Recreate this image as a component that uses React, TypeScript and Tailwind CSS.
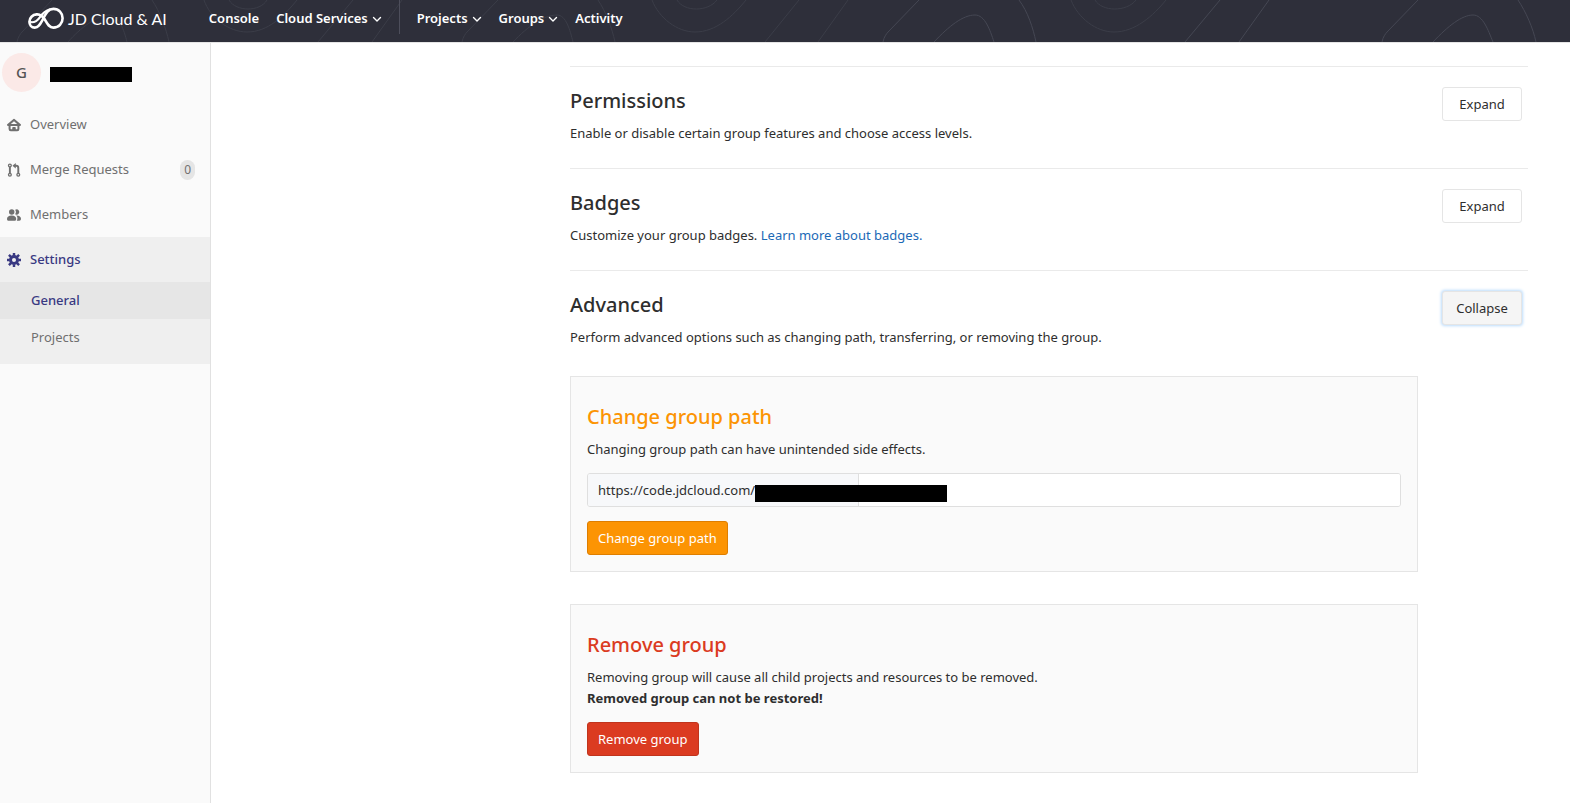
import type { ReactNode } from "react";

const focusRing = "shadow-[0_0_3px_1px_#bcdcfb] bg-[#f5f5f5]";

function Logo() {
  return (
    <svg className="h-6 w-9 shrink-0" viewBox="0 0 36 24" fill="none" stroke="#fff" strokeLinecap="round" aria-hidden="true">
      <path
        d="M8.6 7.4C12.4 7 15 9.6 17 12.8C19.2 16.6 21 20.6 25.4 20.6C30.8 20.6 34.6 16.4 34.6 11.2C34.6 6 30.8 1.9 25.4 1.9C19 1.9 17.2 8.4 14 13.8C12 17.4 10.4 20.6 6.8 20.6C3.4 20.6 1.4 17.8 1.4 14.8C1.4 10.8 4.6 7.8 8.6 7.4Z"
        strokeWidth="2.6"
      />
      <path d="M3 15.2C6.8 15.6 9.4 13.8 11.6 10.6C13.8 7.4 16.6 4 21.4 2.6" strokeWidth="2.2" />
    </svg>
  );
}

function HeaderPattern() {
  return (
    <svg className="absolute inset-0 h-[42px] w-[1570px]" viewBox="0 0 1570 42" fill="none" stroke="#3b3d48" aria-hidden="true">
      <path d="M17 42C18 37 20 34 23 31L52 0M152 0C160 12 166 28 169 42M68 42C80 28 98 15 109 15C119 15 124 30 127 42" />
      <path d="M204 0C210 18 229 32 247 32C268 32 284 16 297 0M229 0C236 12 260 12 267 0M318 42L353 0M372 42L402 0" />
      <path d="M462 42C463 37 465 34 468 31L498 0M598 0C606 12 612 28 615 42M513 42C528 26 544 15 557 15C566 15 570 30 573 42" />
      <path d="M652 0C659 18 677 32 695 32C716 32 733 16 746 0M677 0C684 12 708 12 717 0M765 42L799 0M818 42L848 0" />
      <path stroke="#454753" d="M883 42C884 37 886 34 889 31L919 0M1019 0C1028 12 1033 28 1036 42M934 42C949 26 963 15 975 15C985 15 990 30 994 42" />
      <path d="M1071 0C1078 18 1096 32 1114 32C1135 32 1153 16 1166 0M1095 0C1102 12 1127 12 1136 0" />
      <path stroke="#454753" d="M1185 42L1220 0M1239 42L1269 0M1382 42C1383 37 1385 34 1388 31L1418 0M1518 0C1526 12 1533 28 1536 42M1433 42C1448 26 1462 15 1473 15C1483 15 1488 30 1493 42" />
    </svg>
  );
}

function Chevron() {
  return (
    <svg className="h-2 w-2.5" viewBox="0 0 10 8" fill="none" stroke="currentColor" strokeWidth="1.4" strokeLinecap="round" strokeLinejoin="round" aria-hidden="true">
      <path d="M1.5 2.5L5 6L8.5 2.5" />
    </svg>
  );
}

function HomeIcon() {
  return (
    <svg className="h-3.5 w-3.5" viewBox="0 0 16 16" fill="currentColor" fillRule="evenodd" aria-hidden="true">
      <path d="M8.6 1.2L15.7 7.1C16.3 7.7 16 9.1 15.1 9.1H14.2V12.5A2.5 2.5 0 0 1 11.7 15H4.3A2.5 2.5 0 0 1 1.8 12.5V9.1H.9C0 9.1-.3 7.7.3 7.1L7.4 1.2A1 1 0 0 1 8.6 1.2ZM8 3.7L4.4 6.8H11.6ZM4.1 9.1V12.3A.5.5 0 0 0 4.6 12.8H6V11.2A1 1 0 0 1 7 10.2H9A1 1 0 0 1 10 11.2V12.8H11.4A.5.5 0 0 0 11.9 12.3V9.1Z" />
    </svg>
  );
}

function MergeIcon() {
  return (
    <svg className="h-3.5 w-3.5" viewBox="0 0 16 16" fill="none" stroke="currentColor" strokeWidth="1.5" aria-hidden="true">
      <circle cx="3.3" cy="2.8" r="1.6" />
      <circle cx="3.3" cy="13.4" r="1.6" />
      <circle cx="12.9" cy="13.4" r="1.6" />
      <path d="M3.3 4.4V11.8" strokeWidth="2.2" />
      <path d="M12.9 11.8V5.6C12.9 4 12.2 3.2 10.6 3.2H9" strokeWidth="2.2" />
      <path d="M6.2 3.2L10 0V6.4Z" fill="currentColor" stroke="none" />
    </svg>
  );
}

function MembersIcon() {
  return (
    <svg className="h-3.5 w-3.5" viewBox="0 0 16 16" fill="currentColor" aria-hidden="true">
      <circle cx="5.4" cy="4.6" r="3.1" />
      <path d="M9.4 2.1A3 3 0 1 1 9.4 7.1A4.4 4.4 0 0 0 9.4 2.1Z" />
      <path d="M0 12.5C0 10 2 8.6 5.3 8.6C8.6 8.6 10.5 10 10.5 12.5C10.5 14 9.6 14.6 8.3 14.6H2.2C.9 14.6 0 14 0 12.5Z" />
      <path d="M10.5 8.7C14 8.5 16 10 16 12.4C16 13.8 15.2 14.6 14 14.6H11.2C12.4 12.6 12.2 10.2 10.5 8.7Z" />
    </svg>
  );
}

function GearIcon() {
  return (
    <svg className="h-3.5 w-3.5" viewBox="0 0 16 16" aria-hidden="true">
      <g stroke="currentColor" strokeWidth="2.8">
        <path d="M8 0V3M8 13V16M0 8H3M13 8H16M2.2 2.2L4.5 4.5M11.5 11.5L13.8 13.8M13.8 2.2L11.5 4.5M4.5 11.5L2.2 13.8" />
      </g>
      <circle cx="8" cy="8" r="4" fill="none" stroke="currentColor" strokeWidth="3.4" />
    </svg>
  );
}

function NavItem({ icon, label, badge, active }: { icon: ReactNode; label: string; badge?: string; active?: boolean }) {
  return (
    <a href="#" className={`flex h-[45px] items-center gap-[9px] pt-px pr-[15px] pl-[7px] ${active ? "font-medium text-[#393982]" : "text-[#707070]"}`}>
      {icon}
      <span className="flex-1">{label}</span>
      {badge && <span className="rounded-full bg-[#e5e5e5] px-1 text-xs leading-5">{badge}</span>}
    </a>
  );
}

function Section({ title, button, active, children }: { title: string; button: string; active?: boolean; children: ReactNode }) {
  return (
    <section className="flex h-[102px] items-start justify-between border-t border-[#eaeaea] pt-5 pr-1.5">
      <div>
        <h4 className="text-xl leading-7 font-medium text-[#2e2e2e]">{title}</h4>
        <p className="mt-2 leading-5">{children}</p>
      </div>
      <button type="button" className={`h-[34px] w-20 rounded-[3px] border border-[#e5e5e5] pt-px ${active ? focusRing : "bg-white"}`}>
        {button}
      </button>
    </section>
  );
}

export default function App() {
  return (
    <div className="flex min-h-screen flex-col bg-white font-['Noto_Sans',sans-serif] text-[13px] text-[#2e2e2e]">
      <header className="relative h-[43px] overflow-hidden border-b border-[#e5e5e5] bg-[#2e2f3a] text-white">
        <HeaderPattern />
        <div className="relative flex h-[38px] items-center pl-7">
          <a href="#" className="flex items-center gap-1 font-['Lato',sans-serif] text-base">
            <Logo />
            JD Cloud &amp; AI
          </a>
          <nav className="ml-[42px] flex h-full items-center gap-[17px] font-semibold">
            <a href="#">Console</a>
            <button type="button" className="flex items-center gap-1">Cloud Services <Chevron /></button>
            <span className="h-[34px] w-px self-start bg-[#4d4e5b]" />
            <button type="button" className="flex items-center gap-1">Projects <Chevron /></button>
            <button type="button" className="flex items-center gap-1">Groups <Chevron /></button>
            <a href="#">Activity</a>
          </nav>
        </div>
      </header>
      <div className="flex flex-1">
        <aside className="w-[211px] shrink-0 border-r border-[#e1e1e1] bg-[#fafafa]">
          <a href="#" className="flex h-[59px] items-center gap-[9px] pl-0.5" aria-label="Group">
            <span className="flex h-[39px] w-[39px] items-center justify-center rounded-full bg-[#fbe9e7] text-[15px] font-medium text-[#555]">G</span>
            <span className="mt-1 h-[15px] w-[82px] bg-black" />
          </a>
          <nav>
            <NavItem icon={<HomeIcon />} label="Overview" />
            <NavItem icon={<MergeIcon />} label="Merge Requests" badge="0" />
            <NavItem icon={<MembersIcon />} label="Members" />
            <div className="bg-[#efefef] pb-2">
              <NavItem icon={<GearIcon />} label="Settings" active />
              <a href="#" className="flex h-[37px] items-center bg-[#e6e6e6] pt-px pl-[31px] font-medium text-[#393982]">General</a>
              <a href="#" className="flex h-[37px] items-center pt-px pl-[31px] text-[#707070]">Projects</a>
            </div>
          </nav>
        </aside>
        <main className="grid flex-1 grid-cols-[317px_minmax(0,1fr)] px-[42px] pt-[23px]">
          <div className="col-start-2">
            <Section title="Permissions" button="Expand">Enable or disable certain group features and choose access levels.</Section>
            <Section title="Badges" button="Expand">
              Customize your group badges. <a href="#" className="text-[#1b69b6]">Learn more about badges.</a>
            </Section>
            <Section title="Advanced" button="Collapse" active>
              Perform advanced options such as changing path, transferring, or removing the group.
            </Section>
            <div className="mt-1 mr-[110px] flex flex-col gap-8">
              <form className="border border-[#e5e5e5] bg-[#fafafa] px-4 pt-[26px] pb-4">
                <h4 className="text-xl leading-7 font-medium text-[#fc9403]">Change group path</h4>
                <label htmlFor="group-path" className="mt-2 block leading-5">Changing group path can have unintended side effects.</label>
                <div className="relative mt-3.5 flex h-[34px] overflow-hidden rounded-[3px] border border-[#dfdfdf]">
                  <span className="flex w-[271px] items-center border-r border-[#dfdfdf] bg-[#f7f8fa] pt-px pl-2.5">https://code.jdcloud.com/</span>
                  <input id="group-path" type="text" className="min-w-0 flex-1 bg-white px-2.5 outline-none" />
                  <span className="absolute top-[11px] left-[167px] h-[17px] w-48 bg-black" />
                </div>
                <button type="button" className="mt-3.5 h-[34px] rounded-[3px] border border-[#de7e00] bg-[#fc9403] px-2.5 pt-px text-white">Change group path</button>
              </form>
              <form className="border border-[#e5e5e5] bg-[#fafafa] px-4 pt-[26px] pb-4">
                <h4 className="text-xl leading-7 font-medium text-[#db3b21]">Remove group</h4>
                <p className="mt-2 leading-[21px]">
                  Removing group will cause all child projects and resources to be removed.
                  <br />
                  <strong>Removed group can not be restored!</strong>
                </p>
                <button type="button" className="mt-[13px] h-[34px] rounded-[3px] border border-[#c0341d] bg-[#db3b21] px-2.5 pt-px text-white">Remove group</button>
              </form>
            </div>
          </div>
        </main>
      </div>
    </div>
  );
}
